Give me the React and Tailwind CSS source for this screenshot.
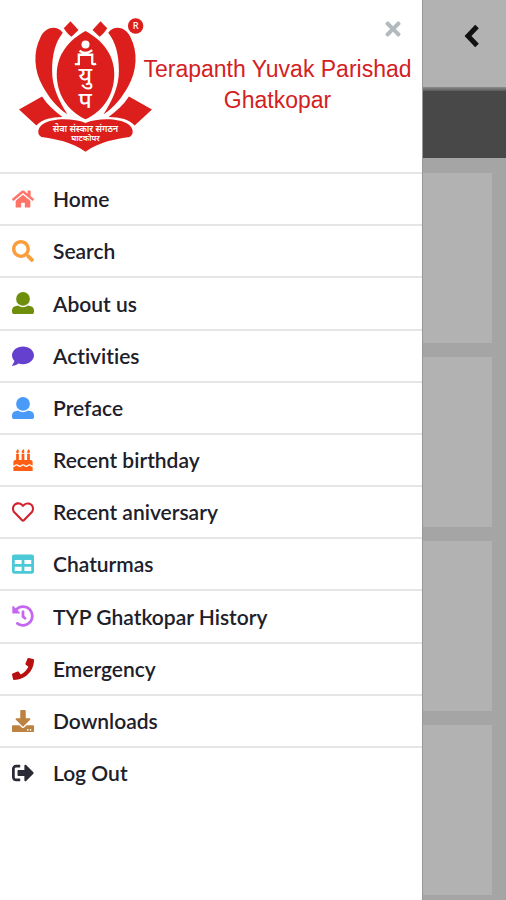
import React from 'react';
import {
  FaBirthdayCake,
  FaComment,
  FaDownload,
  FaHistory,
  FaHome,
  FaPhone,
  FaRegHeart,
  FaSearch,
  FaSignOutAlt,
  FaTable,
  FaTimes,
} from 'react-icons/fa';

function UserIcon({ className }) {
  return (
    <svg viewBox="0 0 512 512" fill="currentColor" className={className} aria-hidden="true">
      <circle cx="256" cy="160" r="160" />
      <path d="M439.283 333.821l-71.313-17.828c-74.923 53.89-165.738 41.864-223.94 0l-71.313 17.828C29.981 344.505 0 382.903 0 426.955V464c0 26.51 21.49 48 48 48h416c26.51 0 48-21.49 48-48v-37.045c0-44.052-29.981-82.45-72.717-93.134z" />
    </svg>
  );
}

const menuItems = [
  { label: 'Home', icon: FaHome, color: 'text-[#ff7468]' },
  { label: 'Search', icon: FaSearch, color: 'text-[#fb9d3a]' },
  { label: 'About us', icon: UserIcon, color: 'text-[#6f8f0c]' },
  { label: 'Activities', icon: FaComment, color: 'text-[#6540cf]' },
  { label: 'Preface', icon: UserIcon, color: 'text-[#4a9bf8]' },
  { label: 'Recent birthday', icon: FaBirthdayCake, color: 'text-[#fb5e14]' },
  { label: 'Recent aniversary', icon: FaRegHeart, color: 'text-[#d3202a]' },
  { label: 'Chaturmas', icon: FaTable, color: 'text-[#4cc9d6]' },
  { label: 'TYP Ghatkopar History', icon: FaHistory, color: 'text-[#c466f0]' },
  { label: 'Emergency', icon: FaPhone, color: 'text-[#b8100f]' },
  { label: 'Downloads', icon: FaDownload, color: 'text-[#bb8240]' },
  { label: 'Log Out', icon: FaSignOutAlt, color: 'text-[#2b2b38]' },
];

function Logo() {
  return (
    <svg
      viewBox="54 50 404 410"
      className="w-[135px] shrink-0"
      role="img"
      aria-label="Terapanth Yuvak Parishad logo"
    >
      <g fill="#dc1f1c">
        {/* Petals */}
        <path d="M188 100C172 78 138 80 122 112C98 158 102 214 128 260C146 292 168 322 202 344C176 304 156 262 156 214C156 164 166 128 188 100Z" />
        <path d="M324 100C340 78 374 80 390 112C414 158 410 214 384 260C366 292 344 322 310 344C336 304 356 262 356 214C356 164 346 128 324 100Z" />
        <path d="M256 95C206 122 170 166 170 224C170 284 202 334 256 359C310 334 342 284 342 224C342 166 306 122 256 95Z" />
        <path d="M211 66L235 92L214 112C206 108 200 100 191 87Z" />
        <path d="M301 66L277 92L298 112C306 108 312 100 321 87Z" />
        {/* Side leaves */}
        <path d="M126 291L57 330L109 378C124 360 152 352 187 352C164 336 142 316 126 291Z" />
        <path d="M386 291L455 330L403 378C388 360 360 352 325 352C348 336 370 316 386 291Z" />
        {/* Base */}
        <path d="M256 370C222 356 158 354 128 374C112 386 110 404 124 412C166 418 214 426 256 456C298 426 346 418 388 412C402 404 400 386 384 374C354 354 290 356 256 370Z" />
        <circle cx="406" cy="80" r="23" />
      </g>
      {/* Figure at the top of the emblem */}
      <circle cx="256" cy="135" r="12" fill="#fff" />
      <path
        d="M224 194H236V166H276V192Q276 196 288 193M238 154Q256 168 276 152"
        fill="none"
        stroke="#fff"
        strokeWidth="7"
      />
      <g
        fill="#fff"
        textAnchor="middle"
        className="font-['Noto_Sans_Devanagari','Noto_Sans',sans-serif]"
      >
        <text x="255" y="252" fontSize="68" fontWeight="500">यु</text>
        <text x="255" y="325" fontSize="68" fontWeight="500">प</text>
        <text x="256" y="396" fontSize="27" fontWeight="600">सेवा संस्कार संगठन</text>
        <text x="256" y="424" fontSize="24" fontWeight="600">घाटकोपर</text>
        <text x="406" y="90" fontSize="28" fontWeight="500">R</text>
      </g>
    </svg>
  );
}

function Drawer() {
  return (
    <aside className="flex min-w-0 flex-1 flex-col bg-white">
      <header className="flex h-[172px] items-start pt-4 pl-[18px]">
        <Logo />
        <div className="flex min-w-0 flex-1 flex-col">
          <button type="button" aria-label="Close menu" className="mt-[2px] mr-[18px] self-end text-[#b3babd]">
            <FaTimes className="size-[22px]" />
          </button>
          <h1 className="-ml-5 pt-[14px] text-center font-['Liberation_Sans',sans-serif] text-[23px] leading-[31px] whitespace-nowrap text-[#d3211f]">
            Terapanth Yuvak Parishad
            <br />
            Ghatkopar
          </h1>
        </div>
      </header>
      <nav>
        <ul className="grid min-h-[626px] auto-rows-fr">
          {menuItems.map(({ label, icon: Icon, color }) => (
            <li key={label} className="border-t-2 border-[#e4e5e6]">
              <a
                href="#"
                className="flex h-full items-center gap-[19px] pl-3 font-[Lato,sans-serif] text-[21px] font-semibold text-[#20202b] [font-variant-ligatures:none]"
              >
                <Icon className={`size-[22px] shrink-0 ${color}`} />
                {label}
              </a>
            </li>
          ))}
        </ul>
      </nav>
    </aside>
  );
}

function DimmedPage() {
  return (
    <main className="w-[84px] shrink-0 border-l border-[#989898] bg-[#a5a5a5]">
      <div className="flex h-[87px] justify-end bg-[#b2b2b2] pt-6 pr-[26px]">
        <button type="button" aria-label="Back" className="self-start text-[#111]">
          <svg viewBox="0 0 16 24" className="h-6 w-4" aria-hidden="true">
            <path d="M13 2.5L4 12L13 21.5" fill="none" stroke="currentColor" strokeWidth="5" />
          </svg>
        </button>
      </div>
      <div className="h-1 bg-linear-to-b from-[#8d8d8d] to-[#5a5a5a]" />
      <div className="h-[67px] bg-[#484848]" />
      <div className="space-y-[14px] pt-[15px] pr-[14px] pb-1">
        <div className="h-[170px] bg-[#b2b2b2]" />
        <div className="h-[170px] bg-[#b2b2b2]" />
        <div className="h-[170px] bg-[#b2b2b2]" />
        <div className="h-[170px] bg-[#b2b2b2]" />
      </div>
    </main>
  );
}

function App() {
  return (
    <div className="flex min-h-screen">
      <Drawer />
      <DimmedPage />
    </div>
  );
}

export default App;
